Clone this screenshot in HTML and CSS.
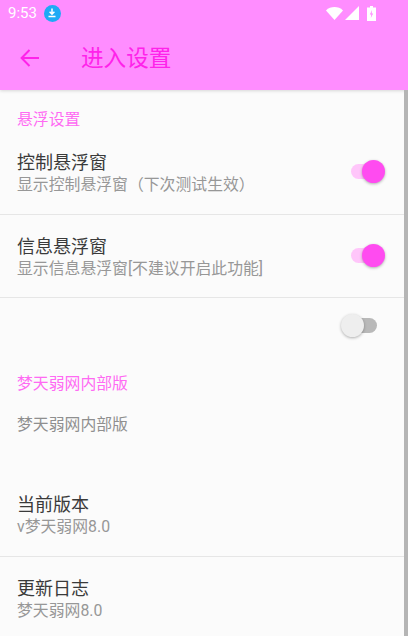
FILE: index.html
```html
<!DOCTYPE html>
<html lang="zh-CN">
<head>
<meta charset="utf-8">
<title>进入设置</title>
<link rel="stylesheet" href="styles.css">
</head>
<body>
<div class="screen">
  <header class="appbar">
    <div class="status">
      <div class="status-left">
        <span class="time">9:53</span>
        <span class="dl"><svg width="12" height="12" viewBox="0 0 12 12"><path d="M6 1.5v5.5M3.6 4.8 6 7.2l2.4-2.4M2.5 9.5h7" fill="none" stroke="#fff" stroke-width="1.5"/></svg></span>
      </div>
      <div class="status-right">
        <svg class="wifi" width="17" height="13" viewBox="0 0 17 13"><path d="M0 3.4C4.6 -1 12.4 -1 17 3.4L8.5 13Z" fill="#fff"/></svg>
        <svg class="signal" width="14" height="14" viewBox="0 0 14 14"><path d="M14 0V14H0Z" fill="#fff"/></svg>
        <svg class="battery" width="9" height="15" viewBox="0 0 9 15"><path d="M3 0h3v1.5h3V15H0V1.5h3Z" fill="#fff"/><path d="M5 4 2.8 8.4h1.5L3.8 12 6.2 7.4H4.7Z" fill="#ff8dff"/></svg>
      </div>
    </div>
    <div class="toolbar">
      <svg class="back" width="24" height="24" viewBox="0 0 24 24"><path d="M21 12H4.5M11.5 4 3.6 12l7.9 8" fill="none" stroke="#ff22ea" stroke-width="2"/></svg>
      <h1 class="title">进入设置</h1>
    </div>
  </header>
  <main class="content">
    <h2 class="section first">悬浮设置</h2>
    <div class="row divided">
      <div class="text"><div class="name">控制悬浮窗</div><div class="sub">显示控制悬浮窗（下次测试生效）</div></div>
      <span class="switch on"><i></i></span>
    </div>
    <div class="row divided">
      <div class="text"><div class="name">信息悬浮窗</div><div class="sub">显示信息悬浮窗[不建议开启此功能]</div></div>
      <span class="switch on"><i></i></span>
    </div>
    <div class="row-empty"><span class="switch"><i></i></span></div>
    <h2 class="section second">梦天弱网内部版</h2>
    <div class="note">梦天弱网内部版</div>
    <div class="row divided version">
      <div class="text"><div class="name">当前版本</div><div class="sub">v梦天弱网8.0</div></div>
    </div>
    <div class="row">
      <div class="text"><div class="name">更新日志</div><div class="sub">梦天弱网8.0</div></div>
    </div>
  </main>
  <div class="scrollbar"></div>
</div>
</body>
</html>
```
FILE: styles.css
```css
* { box-sizing: border-box; }
html, body { margin: 0; padding: 0; }
body { font-family: "Roboto", "Noto Sans CJK SC", sans-serif; background: #fbfbfb; }
.screen { position: relative; width: 408px; height: 636px; overflow: hidden; background: #fbfbfb; }
.appbar { height: 90px; background: #ff8dff; box-shadow: 0 1px 3px rgba(0,0,0,.15); }
.status { height: 26px; display: flex; justify-content: space-between; align-items: center; padding: 0 32px 0 8px; color: #fff; }
.status-left { display: flex; align-items: center; gap: 7px; }
.time { font-size: 15px; font-weight: 400; }
.dl { width: 17px; height: 17px; border-radius: 50%; background: #1eaaf5; display: flex; align-items: center; justify-content: center; }
.status-right { display: flex; align-items: center; gap: 2px; }
.battery { margin-left: 6px; }
.toolbar { height: 64px; display: flex; align-items: center; padding: 0 0 0 18px; }
.back { flex: none; }
.title { margin: 2px 0 0 39px; font-size: 22.6px; font-weight: 400; color: #ff22ea; line-height: 1; }
.section { margin: 0; padding: 0 17px; font-size: 15.85px; font-weight: 400; color: #ff6af3; line-height: 22px; }
.section.first { height: 41px; padding-top: 19px; }
.section.second { margin-top: 21px; }
.row { height: 83.5px; padding: 0 31px 1.5px 17px; display: flex; align-items: center; justify-content: space-between; }
.row.divided { border-bottom: 1.5px solid #e6e6e6; }
.text { display: flex; flex-direction: column; margin-top: 3px; }
.name { font-size: 18px; line-height: 24px; color: #3a3a3a; }
.sub { font-size: 15.85px; line-height: 20px; color: #979797; }
.row-empty { height: 54px; padding-right: 31px; display: flex; justify-content: flex-end; align-items: center; }
.note { padding: 0 17px; margin-top: 18.5px; font-size: 15.85px; line-height: 22px; color: #8f8f8f; }
.version { margin-top: 37.5px; }
.switch { position: relative; display: block; width: 26px; height: 15px; border-radius: 8px; background: #b9b9b9; flex: none; }
.switch i { position: absolute; left: -10px; top: -4px; width: 23px; height: 23px; border-radius: 50%; background: #eeeeee; box-shadow: 0 1px 3px rgba(0,0,0,.3); }
.switch.on { background: #ffc6fa; }
.switch.on i { left: 10.5px; background: #ff4bf0; }
.scrollbar { position: absolute; right: 0; top: 90px; width: 4px; height: 546px; background: #b5b5b5; }
```
